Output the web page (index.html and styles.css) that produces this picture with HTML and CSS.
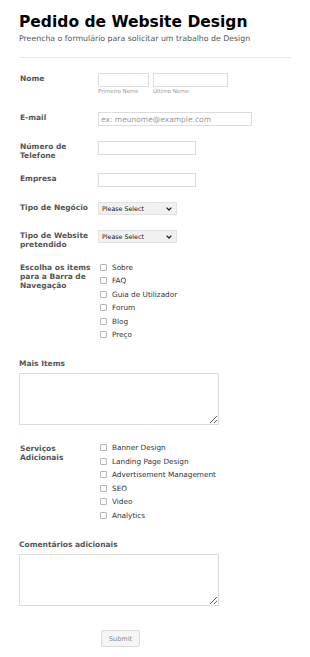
FILE: index.html
```html
<!DOCTYPE html>
<html lang="pt">
<head>
<meta charset="utf-8">
<title>Pedido de Website Design</title>
<link rel="stylesheet" href="styles.css">
</head>
<body>
<div class="page">
  <header class="head">
    <h1 class="title">Pedido de Website Design</h1>
    <p class="subtitle">Preencha o formulário para solicitar um trabalho de Design</p>
  </header>
  <hr class="rule">
  <form class="form">
    <div class="row row-name">
      <label class="lbl">Nome</label>
      <div class="field name-fields">
        <div class="sub">
          <input class="inp inp-first" type="text">
          <span class="sublbl">Primeiro Nome</span>
        </div>
        <div class="sub">
          <input class="inp inp-last" type="text">
          <span class="sublbl">Último Nome</span>
        </div>
      </div>
    </div>
    <div class="row">
      <label class="lbl">E-mail</label>
      <div class="field"><input class="inp inp-email" type="text" placeholder="ex: meunome@example.com"></div>
    </div>
    <div class="row">
      <label class="lbl">Número de Telefone</label>
      <div class="field"><input class="inp inp-mid" type="text"></div>
    </div>
    <div class="row">
      <label class="lbl">Empresa</label>
      <div class="field"><input class="inp inp-mid" type="text"></div>
    </div>
    <div class="row">
      <label class="lbl">Tipo de Negócio</label>
      <div class="field"><div class="select"><span>Please Select</span><svg width="6" height="4" viewBox="0 0 6 4"><path d="M0.6 0.6 L3 3 L5.4 0.6" fill="none" stroke="#222" stroke-width="1.3"/></svg></div></div>
    </div>
    <div class="row">
      <label class="lbl">Tipo de Website pretendido</label>
      <div class="field"><div class="select"><span>Please Select</span><svg width="6" height="4" viewBox="0 0 6 4"><path d="M0.6 0.6 L3 3 L5.4 0.6" fill="none" stroke="#222" stroke-width="1.3"/></svg></div></div>
    </div>
    <div class="row">
      <label class="lbl">Escolha os items para a Barra de Navegação</label>
      <div class="field checks">
        <div class="chk"><span class="box"></span>Sobre</div>
        <div class="chk"><span class="box"></span>FAQ</div>
        <div class="chk"><span class="box"></span>Guia de Utilizador</div>
        <div class="chk"><span class="box"></span>Forum</div>
        <div class="chk"><span class="box"></span>Blog</div>
        <div class="chk"><span class="box"></span>Preço</div>
      </div>
    </div>
    <div class="row row-top">
      <label class="lbl">Mais Items</label>
      <textarea class="area"></textarea>
    </div>
    <div class="row">
      <label class="lbl">Serviços Adicionais</label>
      <div class="field checks">
        <div class="chk"><span class="box"></span>Banner Design</div>
        <div class="chk"><span class="box"></span>Landing Page Design</div>
        <div class="chk"><span class="box"></span>Advertisement Management</div>
        <div class="chk"><span class="box"></span>SEO</div>
        <div class="chk"><span class="box"></span>Video</div>
        <div class="chk"><span class="box"></span>Analytics</div>
      </div>
    </div>
    <div class="row row-top">
      <label class="lbl">Comentários adicionais</label>
      <textarea class="area"></textarea>
    </div>
    <div class="actions">
      <button class="submit" type="button">Submit</button>
    </div>
  </form>
</div>
</body>
</html>
```
FILE: styles.css
```css
* { box-sizing: border-box; }
html, body { margin: 0; padding: 0; background: #fff; }
body {
  font-family: "DejaVu Sans", Verdana, sans-serif;
  color: #555;
}
.page {
  padding: 12px 19px 0 19px;
  width: 310px;
}
.title {
  margin: 0;
  font-size: 15.5px;
  line-height: 20px;
  font-weight: bold;
  color: #000;
}
.subtitle {
  margin: 2px 0 0 0;
  font-size: 7.8px;
  line-height: 10px;
  color: #555;
}
.rule {
  margin: 13px 0 0 0;
  border: 0;
  border-top: 1px solid #e8e8e8;
  width: 272px;
}
.form {
  padding-top: 7.5px;
}
.row {
  display: flex;
  padding: 7.5px 0 7.5px 1px;
}
.row-top {
  flex-direction: column;
  padding-left: 0;
  padding-bottom: 10px;
}
.lbl {
  width: 78px;
  flex: none;
  font-size: 7.5px;
  line-height: 9px;
  font-weight: bold;
  color: #555;
  padding-top: 1px;
  padding-right: 1px;
  margin-bottom: -2px;
}
.row-top .lbl {
  width: auto;
  padding-top: 0;
  margin-bottom: 5px;
}
.field { display: flex; }
.name-fields { gap: 4px; }
.sub { display: flex; flex-direction: column; }
.sublbl {
  font-size: 5.5px;
  line-height: 8px;
  color: #999;
  margin-bottom: 2px;
}
.inp {
  height: 14px;
  border: 1px solid #dcdcdc;
  border-radius: 0;
  padding: 0 2px;
  font-family: "DejaVu Sans", Verdana, sans-serif;
  font-size: 7.5px;
  color: #555;
  background: #fff;
  outline: none;
}
.inp::placeholder { color: #999; }
.inp-first { width: 51px; }
.inp-last { width: 75px; }
.inp-email { width: 154px; }
.inp-mid { width: 98px; }
.select {
  width: 79px;
  height: 13px;
  background: #f1f1f1;
  border: 1px solid #e2e2e2;
  display: flex;
  align-items: center;
  justify-content: space-between;
  padding: 0 4px 0 3px;
  font-size: 6.3px;
  color: #111;
}
.checks {
  flex-direction: column;
  padding-left: 2px;
  margin-top: -1.5px;
  padding-bottom: 2.5px;
}
.chk {
  display: flex;
  align-items: center;
  height: 13.5px;
  font-size: 7.3px;
  color: #333;
}
.box {
  width: 7px;
  height: 7px;
  border: 1px solid #b5b5b5;
  border-radius: 1px;
  margin-right: 5px;
  flex: none;
}
.area {
  width: 200px;
  height: 52px;
  border: 1px solid #dcdcdc;
  resize: vertical;
  margin: 0;
  display: block;
}
.actions {
  padding: 10px 0 0 82px;
}
.submit {
  width: 39px;
  height: 17px;
  background: #f5f5f5;
  border: 1px solid #dadada;
  border-radius: 2px;
  font-family: "DejaVu Sans", Verdana, sans-serif;
  font-size: 6.5px;
  color: #888;
  padding: 0;
}
```
